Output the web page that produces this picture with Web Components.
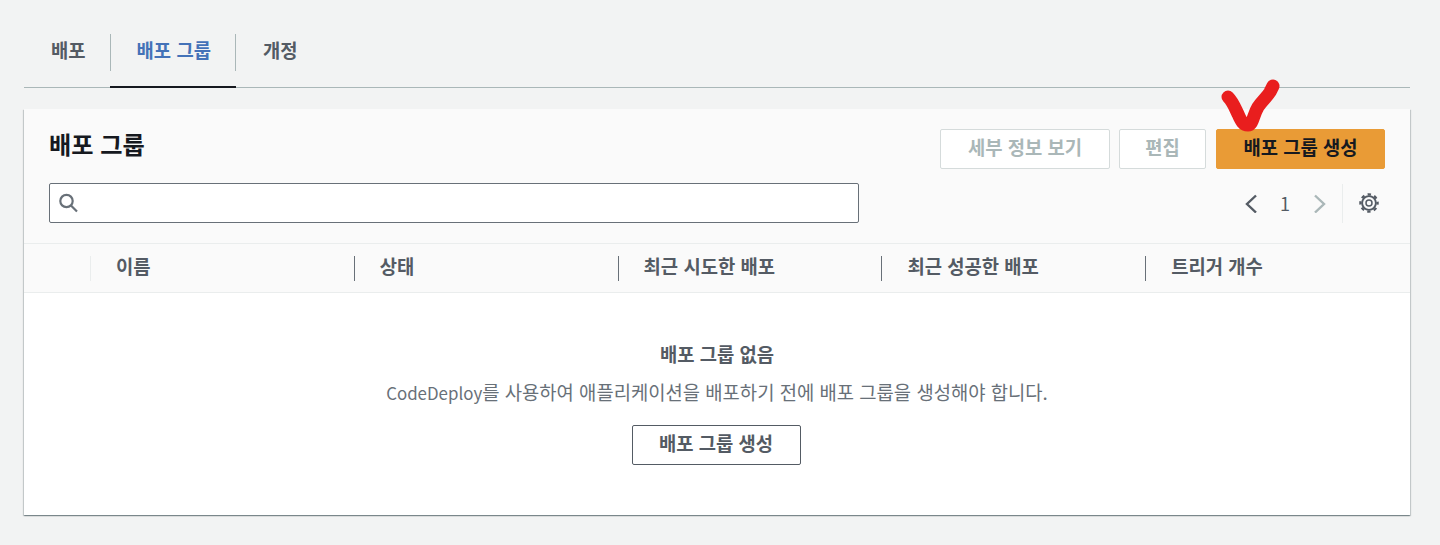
<!DOCTYPE html>
<html lang="ko">
<head>
<meta charset="utf-8">
<title>배포 그룹</title>
<style>
  html, body { margin: 0; height: 100%; }
  body {
    background: #f2f3f3;
    font-family: "Noto Sans CJK KR", "Noto Sans", sans-serif;
    color: #16191f;
    overflow: hidden;
  }
</style>
</head>
<body>
<deploy-page>
  <tab-bar>
    <tab-item>배포</tab-item>
    <tab-item active>배포 그룹</tab-item>
    <tab-item>개정</tab-item>
  </tab-bar>
  <group-card></group-card>
</deploy-page>

<script>
class DeployPage extends HTMLElement {
  constructor() {
    super()
    this.attachShadow({ mode: 'open' }).innerHTML = `
      <style>
        :host { display: block; position: relative; height: 545px; padding: 14px 30px 0 24px; box-sizing: border-box; }
        .mark { position: absolute; left: 1215px; top: 70px; pointer-events: none; }
      </style>
      <slot></slot>
      <svg class="mark" width="70" height="70" viewBox="0 0 70 70" fill="none">
        <path d="M13 27C18 32 20 38 23 44C26 51 28 55 33 55C38 55 38 45 43 37C47 31 52 27 55 22L58 16" stroke="#e91e1e" stroke-width="13" stroke-linecap="round" stroke-linejoin="round"/>
      </svg>`
  }
}

class TabBar extends HTMLElement {
  constructor() {
    super()
    this.attachShadow({ mode: 'open' }).innerHTML = `
      <style>
        :host { display: flex; height: 73px; border-bottom: 1px solid #aab7b8; margin-bottom: 21px; }
      </style>
      <slot></slot>`
  }
}

class TabItem extends HTMLElement {
  constructor() {
    super()
    this.attachShadow({ mode: 'open' }).innerHTML = `
      <style>
        :host { display: flex; box-sizing: border-box; height: 74px; padding: 20px 0 0; font-size: 18.8px; font-weight: 700; color: #545b64; }
        .label { height: 37px; padding: 0 24px 0 27px; line-height: 32px; white-space: nowrap; }
        :host([active]) { color: #4472b8; box-shadow: inset 0 -2px 0 #16191f; }
        :host([active]) .label { border-left: 1px solid #aab7b8; border-right: 1px solid #aab7b8; padding: 0 24px 0 26px; }
      </style>
      <span class="label"><slot></slot></span>`
  }
}

class ActionButton extends HTMLElement {
  constructor() {
    super()
    this.attachShadow({ mode: 'open' }).innerHTML = `
      <style>
        :host { display: inline-flex; align-items: center; justify-content: center; box-sizing: border-box; height: 40px; padding-bottom: 6px; font-size: 18.8px; font-weight: 700; border-radius: 2px; border: 1px solid #545b64; color: #545b64; background: #fff; white-space: nowrap; }
        :host([disabled]) { border-color: #d5dbdb; color: #aab7b8; }
        :host([primary]) { background: #e99b36; border-color: #e99b36; color: #16191f; }
      </style>
      <slot></slot>`
  }
}

class GroupCard extends HTMLElement {
  constructor() {
    super()
    const columns = ['이름', '상태', '최근 시도한 배포', '최근 성공한 배포', '트리거 개수']
    this.attachShadow({ mode: 'open' }).innerHTML = `
      <style>
        :host { display: block; height: 406px; background: #fff; box-shadow: 0 1px 1px 0 rgba(0,28,36,.3), 1px 1px 1px 0 rgba(0,28,36,.15), -1px 1px 1px 0 rgba(0,28,36,.15); }
        header { box-sizing: border-box; height: 135px; background: #fafafa; padding: 20px 25px 0; display: grid; grid-template-columns: 810px 1fr; grid-template-rows: 54px 40px; border-bottom: 1px solid #eaeded; }
        h2 { margin: 0; font-size: 24.2px; font-weight: 700; line-height: 30px; color: #16191f; }
        .actions { display: flex; justify-content: flex-end; }
        .actions action-button:nth-child(1) { width: 170px; margin-right: 9px; }
        .actions action-button:nth-child(2) { width: 87px; margin-right: 10px; }
        .actions action-button:nth-child(3) { width: 169px; }
        .search { grid-row: 2; box-sizing: border-box; height: 40px; background: #fff; border: 1px solid #687078; border-radius: 2px; display: flex; align-items: center; padding-left: 9px; }
        .pager { grid-row: 2; display: flex; align-items: center; justify-content: flex-end; color: #545b64; font-size: 18px; padding-right: 6px; }
        .pager span { width: 53px; text-align: center; padding-right: 1px; box-sizing: border-box; }
        .pager .divider { width: 1px; height: 39px; background: #eaeded; margin: 0 16px 0 14px; }
        .columns { box-sizing: border-box; height: 49px; background: #fafafa; border-bottom: 1px solid #eaeded; display: grid; grid-template-columns: 66px repeat(4, 263.8px) 1fr; align-items: center; }
        .columns div { height: 25px; line-height: 19px; font-size: 18.8px; font-weight: 700; color: #545b64; padding-left: 25px; border-left: 1px solid #687078; white-space: nowrap; }
        .columns div:first-child { border: 0; padding: 0; }
        .columns div:nth-child(2) { border-left-color: #eaeded; }
        .empty { display: flex; flex-direction: column; align-items: center; padding-top: 49px; }
        .empty strong { font-size: 18.8px; line-height: 24px; color: #545b64; }
        .empty p { margin: 14px 0 20px; font-size: 18.8px; line-height: 24px; color: #687078; white-space: nowrap; }
        .empty p span { font-size: 16.9px; }
        .empty action-button { width: 169px; margin-right: 2px; }
      </style>
      <header>
        <h2>배포 그룹</h2>
        <div class="actions">
          <action-button disabled>세부 정보 보기</action-button>
          <action-button disabled>편집</action-button>
          <action-button primary>배포 그룹 생성</action-button>
        </div>
        <div class="search">
          <svg width="20" height="20" viewBox="0 0 20 20" fill="none" stroke="#687078" stroke-width="2.2"><circle cx="7.500" cy="8" r="6.200"/><path d="M12 12.500l6 6"/></svg>
        </div>
        <div class="pager">
          <svg width="16" height="20" viewBox="0 0 16 20" fill="none" stroke="#545b64" stroke-width="2.4"><path d="M13 2.500L4 11l9 8.500"/></svg>
          <span>1</span>
          <svg width="16" height="20" viewBox="0 0 16 20" fill="none" stroke="#aab7b8" stroke-width="2.4"><path d="M3 2.500l9 8.500-9 8.500"/></svg>
          <i class="divider"></i>
          <svg width="20" height="20" viewBox="0 0 20 20" fill="none" stroke="#545b64">
            <circle cx="10" cy="10" r="6.900" stroke-width="1.900"/>
            <circle cx="10" cy="10" r="8.600" stroke-width="2.300" stroke-dasharray="3.380 3.380" stroke-dashoffset="1.690"/>
            <circle cx="10" cy="10" r="3" stroke-width="1.500"/>
          </svg>
        </div>
      </header>
      <div class="columns"><div></div>${columns.map((c) => `<div>${c}</div>`).join('')}</div>
      <div class="empty">
        <strong>배포 그룹 없음</strong>
        <p><span>CodeDeploy</span>를 사용하여 애플리케이션을 배포하기 전에 배포 그룹을 생성해야 합니다.</p>
        <action-button>배포 그룹 생성</action-button>
      </div>`
  }
}

customElements.define('deploy-page', DeployPage)
customElements.define('tab-bar', TabBar)
customElements.define('tab-item', TabItem)
customElements.define('action-button', ActionButton)
customElements.define('group-card', GroupCard)
</script>
</body>
</html>
